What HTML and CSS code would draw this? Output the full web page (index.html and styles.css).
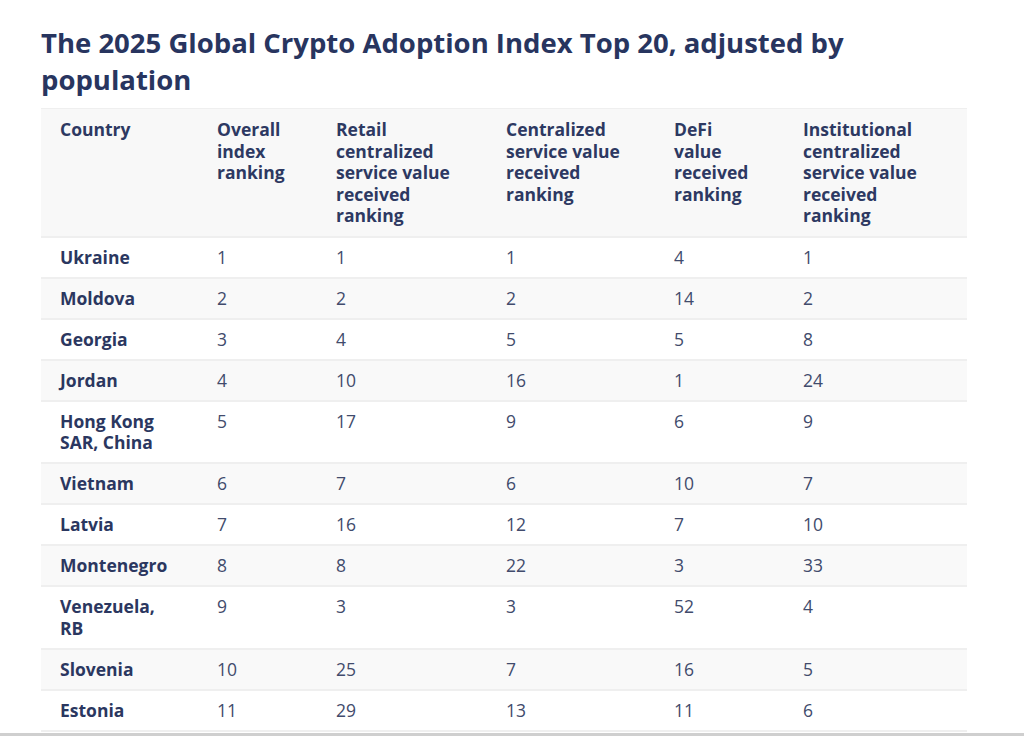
FILE: index.html
```html
<!DOCTYPE html>
<html lang="en">
<head>
<meta charset="utf-8">
<title>The 2025 Global Crypto Adoption Index Top 20</title>
<link rel="stylesheet" href="styles.css">
</head>
<body>
<main class="page">
  <h1 class="title">The 2025 Global Crypto Adoption Index Top 20, adjusted by population</h1>
  <table class="rank-table">
    <colgroup>
      <col class="c-country"><col class="c-overall"><col class="c-retail"><col class="c-central"><col class="c-defi"><col class="c-inst">
    </colgroup>
    <thead>
      <tr>
        <th>Country</th>
        <th>Overall<br>index<br>ranking</th>
        <th>Retail<br>centralized<br>service value<br>received<br>ranking</th>
        <th>Centralized<br>service value<br>received<br>ranking</th>
        <th>DeFi<br>value<br>received<br>ranking</th>
        <th>Institutional<br>centralized<br>service value<br>received<br>ranking</th>
      </tr>
    </thead>
    <tbody>
      <tr><td>Ukraine</td><td>1</td><td>1</td><td>1</td><td>4</td><td>1</td></tr>
      <tr><td>Moldova</td><td>2</td><td>2</td><td>2</td><td>14</td><td>2</td></tr>
      <tr><td>Georgia</td><td>3</td><td>4</td><td>5</td><td>5</td><td>8</td></tr>
      <tr><td>Jordan</td><td>4</td><td>10</td><td>16</td><td>1</td><td>24</td></tr>
      <tr><td>Hong Kong<br>SAR, China</td><td>5</td><td>17</td><td>9</td><td>6</td><td>9</td></tr>
      <tr><td>Vietnam</td><td>6</td><td>7</td><td>6</td><td>10</td><td>7</td></tr>
      <tr><td>Latvia</td><td>7</td><td>16</td><td>12</td><td>7</td><td>10</td></tr>
      <tr><td>Montenegro</td><td>8</td><td>8</td><td>22</td><td>3</td><td>33</td></tr>
      <tr><td>Venezuela,<br>RB</td><td>9</td><td>3</td><td>3</td><td>52</td><td>4</td></tr>
      <tr><td>Slovenia</td><td>10</td><td>25</td><td>7</td><td>16</td><td>5</td></tr>
      <tr><td>Estonia</td><td>11</td><td>29</td><td>13</td><td>11</td><td>6</td></tr>
    </tbody>
  </table>
</main>
<div class="edge"></div>
</body>
</html>
```

FILE: styles.css
```css
html, body {
  margin: 0;
  padding: 0;
  background: #ffffff;
}

body {
  font-family: "Open Sans", "Noto Sans", sans-serif;
  color: #2b3760;
  overflow: hidden;
}

.page {
  padding: 24px 57px 0 41px;
}

.title {
  max-width: 815px;
  margin: 0 0 10px;
  font-size: 27.5px;
  line-height: 37px;
  font-weight: 700;
  color: #28355f;
}

.rank-table {
  width: 926px;
  border-collapse: collapse;
  table-layout: fixed;
  font-size: 17.5px;
  line-height: 21.5px;
  border-top: 1px solid #efefef;
}

.c-country { width: 157px; }
.c-overall { width: 119px; }
.c-retail { width: 170px; }
.c-central { width: 168px; }
.c-defi { width: 129px; }
.c-inst { width: 183px; }

.rank-table th,
.rank-table td {
  text-align: left;
  vertical-align: top;
  padding: 9px 6px 8.5px 19px;
  border-bottom: 2px solid #efefef;
}

.rank-table th {
  background: #f8f8f8;
  font-weight: 700;
  color: #2d3962;
  padding-top: 10px;
  padding-bottom: 9px;
}

.rank-table td {
  font-weight: 400;
  color: #414b6c;
}

.rank-table td:first-child {
  font-weight: 700;
  color: #2b3760;
}

.rank-table tbody tr:nth-child(even) {
  background: #f9f9f9;
}

.edge {
  height: 3px;
  margin-top: 1px;
  background: #cfcfcf;
}
```
